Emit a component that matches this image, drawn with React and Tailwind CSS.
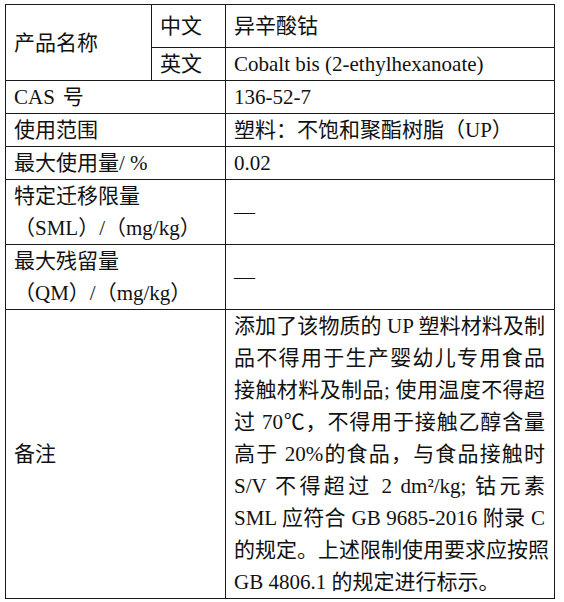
import React from 'react';

const cell = 'border border-[#1a1a1a] px-[8px] py-0 align-middle';

const remarks = [
  '添加了该物质的 UP 塑料材料及制',
  '品不得用于生产婴幼儿专用食品',
  '接触材料及制品; 使用温度不得超',
  '过 70℃，不得用于接触乙醇含量',
  '高于 20%的食品，与食品接触时',
  'S/V 不得超过 2 dm²/kg; 钴元素',
  'SML 应符合 GB 9685-2016 附录 C',
  '的规定。上述限制使用要求应按照',
];

const App = () => {
  return (
    <div className="min-h-[602px] bg-white pl-[5px] pt-[4px] text-[#111] text-[21px] leading-[32px] font-[family-name:'Liberation_Serif','Noto_Sans_CJK_SC',serif]">
      <table className="w-[549px] table-fixed border-collapse">
        <colgroup>
          <col className="w-[146px]" />
          <col className="w-[74px]" />
          <col className="w-[329px]" />
        </colgroup>
        <tbody>
          <tr className="h-[43px]">
            <td rowSpan={2} className={cell}>产品名称</td>
            <td className={cell}>中文</td>
            <td className={cell}>异辛酸钴</td>
          </tr>
          <tr className="h-[32px]">
            <td className={cell}>英文</td>
            <td className={cell}>Cobalt bis (2-ethylhexanoate)</td>
          </tr>
          <tr className="h-[32px]">
            <td colSpan={2} className={cell}>
              CAS<span className="ml-[8px]">号</span>
            </td>
            <td className={cell}>136-52-7</td>
          </tr>
          <tr className="h-[33px]">
            <td colSpan={2} className={cell}>使用范围</td>
            <td className={cell}>塑料：不饱和聚酯树脂（UP）</td>
          </tr>
          <tr className="h-[33px]">
            <td colSpan={2} className={cell}>最大使用量/ %</td>
            <td className={cell}>0.02</td>
          </tr>
          <tr className="h-[64px]">
            <td colSpan={2} className={cell}>
              <div>特定迁移限量</div>
              <div>（SML）/（mg/kg）</div>
            </td>
            <td className={cell}>—</td>
          </tr>
          <tr className="h-[64px]">
            <td colSpan={2} className={cell}>
              <div>最大残留量</div>
              <div>（QM）/（mg/kg）</div>
            </td>
            <td className={cell}>—</td>
          </tr>
          <tr className="h-[289px]">
            <td colSpan={2} className={cell}>备注</td>
            <td className={`${cell} pr-[9px]`}>
              {remarks.map((line) => (
                <div key={line} className="whitespace-nowrap text-justify [text-align-last:justify]">
                  {line}
                </div>
              ))}
              <div className="whitespace-nowrap">GB 4806.1 的规定进行标示。</div>
            </td>
          </tr>
        </tbody>
      </table>
    </div>
  );
};

export default App;
